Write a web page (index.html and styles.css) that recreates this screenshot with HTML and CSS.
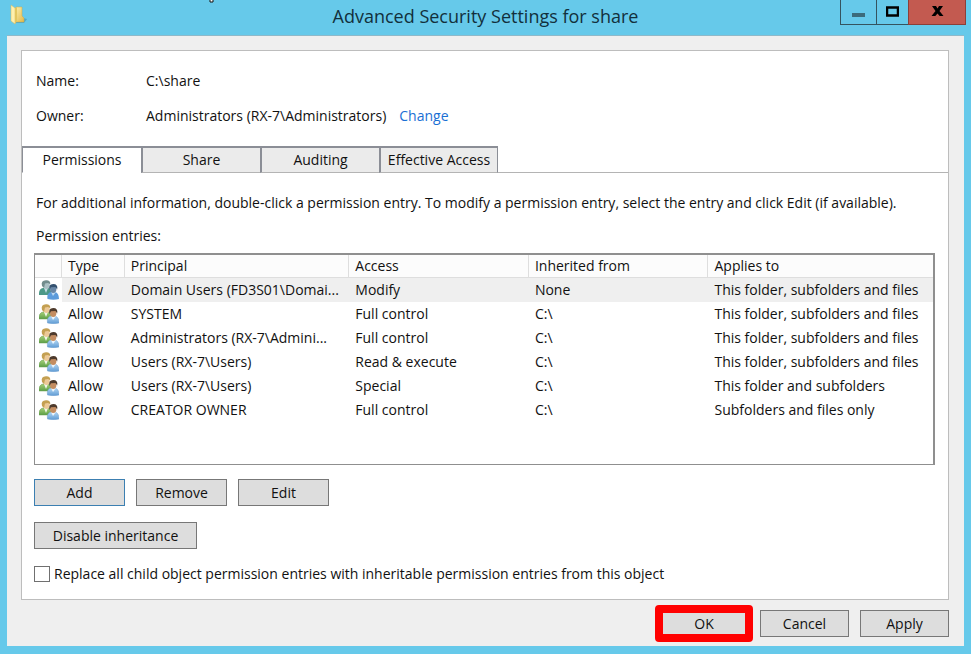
FILE: index.html
```html
<!DOCTYPE html>
<html lang="en">
<head>
<meta charset="utf-8">
<title>Advanced Security Settings for share</title>
<link rel="stylesheet" href="styles.css">
</head>
<body>
<svg class="defs" aria-hidden="true">
  <defs>
    <linearGradient id="blue" x1="0" y1="0" x2="0" y2="1"><stop offset="0" stop-color="#b4d8f4"/><stop offset="1" stop-color="#5f9bd4"/></linearGradient>
    <linearGradient id="green" x1="0" y1="0" x2="0" y2="1"><stop offset="0" stop-color="#a5cf78"/><stop offset="1" stop-color="#5c9f46"/></linearGradient>
    <linearGradient id="gold" x1="0" y1="0" x2="1" y2="1"><stop offset="0" stop-color="#fff0ae"/><stop offset="1" stop-color="#dfb94b"/></linearGradient>
    <symbol id="users" viewBox="0 0 20 20">
      <path d="M0 15q-.5-6 4-7h6l3 4v3z" fill="url(#green)" stroke="#6b9c55" stroke-width=".5"/>
      <path d="M5 8l2 5 2-5z" fill="#f2f6ea"/>
      <ellipse cx="7.500" cy="5" rx="3.200" ry="4" fill="#ecc997"/>
      <path d="M3 6Q1.500 .5 7 .3q4.500-.2 4.300 4L9 3 6 3.500 5 8z" fill="#c4a052"/>
      <path d="M8.500 19q-1-6 3.500-7h4q4 1 4 7-5.500 1.500-11.500 0z" fill="url(#blue)" stroke="#6a9ccc" stroke-width=".5"/>
      <path d="M12 12l2 4 3-4z" fill="#eef6fc"/>
      <ellipse cx="14.200" cy="9" rx="3.200" ry="4" fill="#c48d61"/>
      <path d="M10.500 10q-1.500-6 3.700-6 5 0 4 5.500L16.500 7l-4.500.3z" fill="#4d3a2c"/>
    </symbol>
    <symbol id="users-selected" viewBox="0 0 20 20">
      <path d="M0 15q-.5-6 4-7h6l3 4v3z" fill="#4c9988"/>
      <path d="M5 8l2 5 2-5z" fill="#c5dce5"/>
      <ellipse cx="7.500" cy="5" rx="3.200" ry="4" fill="#abc0c4"/>
      <path d="M3 6Q1.500 .5 7 .3q4.500-.2 4.300 4L9 3 6 3.500 5 8z" fill="#728c8c"/>
      <path d="M8.500 19q-1-6 3.500-7h4q4 1 4 7-5.500 1.500-11.500 0z" fill="#5c9bdb"/>
      <path d="M12 12l2 4 3-4z" fill="#bcd9f2"/>
      <ellipse cx="14.200" cy="9" rx="3.200" ry="4" fill="#6987a6"/>
      <path d="M10.500 10q-1.500-6 3.700-6 5 0 4 5.500L16.500 7l-4.500.3z" fill="#34516f"/>
    </symbol>
  </defs>
</svg>
<svg class="pointer" viewBox="0 0 6 4" aria-hidden="true"><path d="M1 0v2h3V0" fill="#fff" stroke="#111"/></svg>
<div class="window">
  <header class="titlebar">
    <svg class="folder" viewBox="0 0 18 22" aria-hidden="true">
      <path d="M13 14l4 1-3 4H5z" fill="#3f93b4" opacity=".6"/>
      <path d="M6 3h6v9l2 2v4H5z" fill="url(#gold)" stroke="#c8a84b" stroke-width=".5"/>
      <path d="M1 1l4 3v16l-4-3z" fill="#fff0ad" stroke="#d5b85d" stroke-width=".5"/>
      <path d="M5 4l2-1v14l-2 3z" fill="#e3c660"/>
    </svg>
    <h1>Advanced Security Settings for share</h1>
    <div class="captions">
      <button class="minimize" aria-label="Minimize"><svg viewBox="0 0 13 12"><path d="M0 7h13v4H0z" fill="#3c6b7b"/></svg></button>
      <button class="maximize" aria-label="Maximize"><svg viewBox="0 0 13 12"><path d="M1 1.500h11v8H1z" fill="none" stroke="#000" stroke-width="2.500"/></svg></button>
      <button class="close" aria-label="Close"><svg viewBox="0 0 13 12"><path d="M1 0h4l1.500 2.500L8 0h4L8.500 5l4 5H8.700L6.500 7.500l-2.200 2.500H.5l4-5z" fill="#000"/></svg></button>
    </div>
  </header>
  <main class="client">
    <section class="panel">
      <dl class="facts">
        <dt>Name:</dt><dd>C:\share</dd>
        <dt>Owner:</dt><dd>Administrators (RX-7\Administrators)<a href="#">Change</a></dd>
      </dl>
      <div class="tabs" role="tablist">
        <button role="tab" aria-selected="true">Permissions</button>
        <button role="tab" aria-selected="false">Share</button>
        <button role="tab" aria-selected="false">Auditing</button>
        <button role="tab" aria-selected="false">Effective Access</button>
      </div>
      <div class="page">
        <p>For additional information, double-click a permission entry. To modify a permission entry, select the entry and click Edit (if available).</p>
        <p id="entries">Permission entries:</p>
        <div class="list">
          <table aria-labelledby="entries">
            <colgroup><col class="c-icon"><col class="c-type"><col class="c-principal"><col class="c-access"><col class="c-from"><col></colgroup>
            <thead><tr><th></th><th>Type</th><th>Principal</th><th>Access</th><th>Inherited from</th><th>Applies to</th></tr></thead>
            <tbody>
              <tr class="selected"><td><svg><use href="#users-selected"/></svg></td><td>Allow</td><td>Domain Users (FD3S01\Domai...</td><td>Modify</td><td>None</td><td>This folder, subfolders and files</td></tr>
              <tr><td><svg><use href="#users"/></svg></td><td>Allow</td><td>SYSTEM</td><td>Full control</td><td>C:\</td><td>This folder, subfolders and files</td></tr>
              <tr><td><svg><use href="#users"/></svg></td><td>Allow</td><td>Administrators (RX-7\Admini...</td><td>Full control</td><td>C:\</td><td>This folder, subfolders and files</td></tr>
              <tr><td><svg><use href="#users"/></svg></td><td>Allow</td><td>Users (RX-7\Users)</td><td>Read &amp; execute</td><td>C:\</td><td>This folder, subfolders and files</td></tr>
              <tr><td><svg><use href="#users"/></svg></td><td>Allow</td><td>Users (RX-7\Users)</td><td>Special</td><td>C:\</td><td>This folder and subfolders</td></tr>
              <tr><td><svg><use href="#users"/></svg></td><td>Allow</td><td>CREATOR OWNER</td><td>Full control</td><td>C:\</td><td>Subfolders and files only</td></tr>
            </tbody>
          </table>
        </div>
        <div class="actions">
          <button class="btn focused">Add</button>
          <button class="btn">Remove</button>
          <button class="btn">Edit</button>
        </div>
        <div class="actions"><button class="btn wide">Disable inheritance</button></div>
        <label class="check"><input type="checkbox"><span>Replace all child object permission entries with inheritable permission entries from this object</span></label>
      </div>
    </section>
    <footer class="footer">
      <div class="marked"><button class="btn">OK</button></div>
      <button class="btn">Cancel</button>
      <button class="btn">Apply</button>
    </footer>
  </main>
</div>
</body>
</html>
```
FILE: styles.css
```css
* { box-sizing: border-box; }
body {
  margin: 0;
  background: #66c9ea;
  color: #111;
  font: 14px/20px "Open Sans", "Noto Sans", sans-serif;
}
button { font: inherit; color: inherit; padding: 0; margin: 0; }
h1, p, dl, dd { margin: 0; }
.defs { position: absolute; width: 0; height: 0; }
.pointer { position: absolute; left: 209px; top: 0; width: 6px; height: 4px; }

.window { min-height: 100vh; display: flex; flex-direction: column; padding-bottom: 8px; }
.titlebar { display: grid; grid-template-columns: 1fr auto 1fr; height: 35px; padding: 0 5px 0 5px; }
.folder { width: 18px; height: 22px; margin: 4px 0 0 5px; }
.titlebar h1 { font-size: 18px; font-weight: 400; line-height: 32px; color: #12303c; }
.captions { display: flex; justify-content: flex-end; height: 25px; }
.captions button {
  display: flex; justify-content: center; align-items: center;
  border: solid #35545f; border-width: 0 0 1px 1px; background: none;
}
.captions svg { width: 13px; height: 12px; }
.captions .minimize { width: 36px; }
.captions .maximize { width: 32px; }
.captions .close { width: 58px; background: #c35a50; border-color: #8c3f38; border-right-width: 1px; }

.client { flex: 1; background: #efefef; border-top: 1px solid #8fb9c9; margin: 0 7px; padding: 14px 15px 0 14px; }
.panel { background: #fff; border: 1px solid #bdbdbd; padding-bottom: 15px; }
.facts { display: grid; grid-template-columns: 110px 1fr; row-gap: 15px; padding: 20px 14px; }
.facts a { margin-left: 13px; color: #1a6fd4; text-decoration: none; }

.tabs { display: flex; height: 27px; border-bottom: 1px solid #b4b4b4; }
.tabs button {
  width: 119px; height: 27px;
  background: #ebebeb; border: 1px solid #8b8e96; border-width: 2px 0 1px 2px; border-bottom-color: #b4b4b4;
}
.tabs button:last-child { border-right-width: 1px; }
.tabs button[aria-selected="true"] { background: #fff; border-bottom-color: #fff; border-left-width: 1px; }

.page { padding: 20px 13px 0 12px; }
.page p { padding-left: 2px; margin-bottom: 13px; }
.page #entries { margin-bottom: 7px; }
.list { height: 212px; border: 2px solid #8f8f8f; border-left-width: 1px; border-bottom-width: 1px; margin-bottom: 14px; }
table { width: 100%; border-collapse: separate; border-spacing: 0; table-layout: fixed; }
.c-icon { width: 3%; }
.c-type { width: 7%; }
.c-principal { width: 25%; }
.c-access, .c-from { width: 20%; }
th { height: 23px; padding: 0 0 0 6px; font-weight: 400; text-align: left; border: solid #dedede; border-width: 0 1px 1px 0; background: #fcfcfc; }
th:last-child { border-right: 0; }
td { height: 24px; padding: 0 0 0 6px; white-space: nowrap; }
td:first-child { padding: 0 0 0 4px; }
td svg { display: block; width: 20px; height: 20px; overflow: visible; }
.selected td:not(:first-child) { background: #efefef; }

.actions { display: flex; gap: 11px; margin-bottom: 16px; }
.btn { width: 91px; height: 27px; background: #dddddd; border: 1px solid #777; }
.btn.focused { border-color: #3c7fb1; }
.btn.wide { width: 163px; }
.actions + .check { margin-top: -1px; }
.check { display: flex; align-items: center; gap: 4px; }
.check input { appearance: none; width: 16px; height: 16px; margin: 0; border: 1px solid #707070; background: #fff; }

.footer { display: flex; justify-content: flex-end; align-items: center; gap: 11px; padding-top: 5px; }
.footer .btn { width: 89px; }
.footer .marked { display: flex; border: 8px solid #f00; border-radius: 4px; margin-right: -4px; }
.footer .marked .btn { width: 82px; height: 21px; border: 0; }
```
